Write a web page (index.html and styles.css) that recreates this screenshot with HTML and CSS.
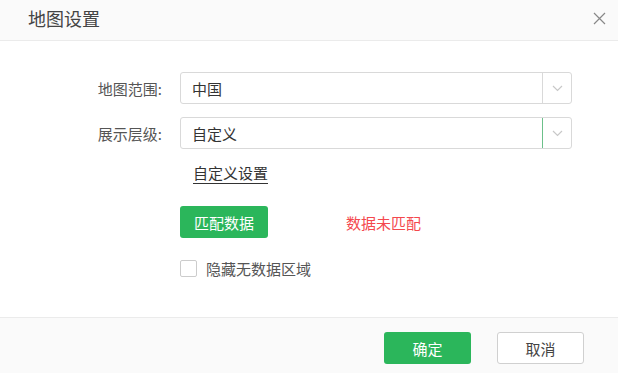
FILE: index.html
```html
<!DOCTYPE html>
<html lang="zh-CN">
<head>
    <meta charset="UTF-8">
    <title>地图设置</title>
    <link rel="stylesheet" href="styles.css">
</head>
<body>

<div class="dialog">

    <!-- Header -->
    <div class="dialog-header">
        <span class="dialog-title">地图设置</span>
        <span class="close-btn">
            <svg width="13" height="13" viewBox="0 0 13 13"><path d="M1 1 L12 12 M12 1 L1 12" stroke="#888" stroke-width="1.2" fill="none"/></svg>
        </span>
    </div>

    <!-- Body -->
    <div class="dialog-body">
        <div class="form-row">
            <label class="form-label">地图范围:</label>
            <div class="select">
                <span class="select-value">中国</span>
                <span class="select-arrow">
                    <svg width="11" height="7" viewBox="0 0 11 7"><path d="M1 1 L5.5 5.5 L10 1" stroke="#c8c8c8" stroke-width="1.2" fill="none"/></svg>
                </span>
            </div>
        </div>

        <div class="form-row">
            <label class="form-label">展示层级:</label>
            <div class="select active">
                <span class="select-value">自定义</span>
                <span class="select-arrow">
                    <svg width="11" height="7" viewBox="0 0 11 7"><path d="M1 1 L5.5 5.5 L10 1" stroke="#c8c8c8" stroke-width="1.2" fill="none"/></svg>
                </span>
            </div>
        </div>

        <div class="indent">
            <a class="custom-link">自定义设置</a>
        </div>

        <div class="indent match-row">
            <button class="btn btn-primary">匹配数据</button>
            <span class="match-status">数据未匹配</span>
        </div>

        <div class="indent check-row">
            <span class="checkbox"></span>
            <span class="check-label">隐藏无数据区域</span>
        </div>
    </div>

    <!-- Footer -->
    <div class="dialog-footer">
        <button class="btn btn-primary btn-footer">确定</button>
        <button class="btn btn-default btn-footer">取消</button>
    </div>

</div>

</body>
</html>
```

FILE: styles.css
```css
body {
    margin: 0;
    padding: 0;
    font-family: "Noto Sans CJK SC", "Noto Sans", sans-serif;
    font-size: 15px;
    color: #333;
    background: #fff;
}

.dialog {
    width: 618px;
    height: 373px;
    display: flex;
    flex-direction: column;
    background: #fff;
}

.dialog-header {
    height: 40px;
    background: #fafafa;
    border-bottom: 1px solid #ebebeb;
    display: flex;
    align-items: center;
    justify-content: space-between;
    padding: 0 12px 0 28px;
}

.dialog-title {
    font-size: 18px;
    line-height: 37px;
    color: #444;
    margin-top: -3px;
}

.close-btn {
    display: flex;
    margin-top: -3px;
}

.dialog-body {
    flex: 1;
    padding-top: 31px;
}

.form-row {
    display: flex;
    align-items: center;
    margin-bottom: 13px;
}

.form-label {
    width: 162px;
    text-align: right;
    padding-right: 18px;
    color: #555;
}

.select {
    width: 390px;
    height: 30px;
    border: 1px solid #d9d9d9;
    border-radius: 3px;
    display: flex;
    align-items: center;
}

.select-value {
    flex: 1;
    padding-left: 11px;
    color: #333;
}

.select-arrow {
    width: 28px;
    height: 30px;
    border-left: 1px solid #d9d9d9;
    display: flex;
    align-items: center;
    justify-content: center;
}

.select.active .select-arrow {
    border-left-color: #6cc08a;
}

.indent {
    margin-left: 180px;
}

.custom-link {
    display: inline-block;
    margin-left: 13px;
    margin-top: 1px;
    line-height: 20px;
    border-bottom: 1px solid #333;
    color: #333;
}

.match-row {
    display: flex;
    align-items: center;
    margin-top: 22px;
}

.btn {
    font-family: inherit;
    font-size: 15px;
    height: 32px;
    border-radius: 3px;
    cursor: pointer;
}

.btn-primary {
    width: 88px;
    background: #2bb65b;
    border: none;
    color: #fff;
}

.btn-default {
    background: #fff;
    border: 1px solid #d0d0d0;
    color: #444;
}

.match-status {
    margin-left: 78px;
    color: #f4484d;
}

.check-row {
    display: flex;
    align-items: center;
    margin-top: 20px;
}

.checkbox {
    width: 15px;
    height: 15px;
    border: 1px solid #ccc;
    border-radius: 2px;
    background: #fff;
}

.check-label {
    margin-left: 9px;
    color: #555;
}

.dialog-footer {
    height: 56px;
    background: #fafafa;
    border-top: 1px solid #ebebeb;
    display: flex;
    justify-content: flex-end;
    align-items: flex-start;
    padding: 14px 34px 0 0;
    box-sizing: border-box;
    gap: 26px;
}

.btn-footer {
    width: 87px;
}
```
